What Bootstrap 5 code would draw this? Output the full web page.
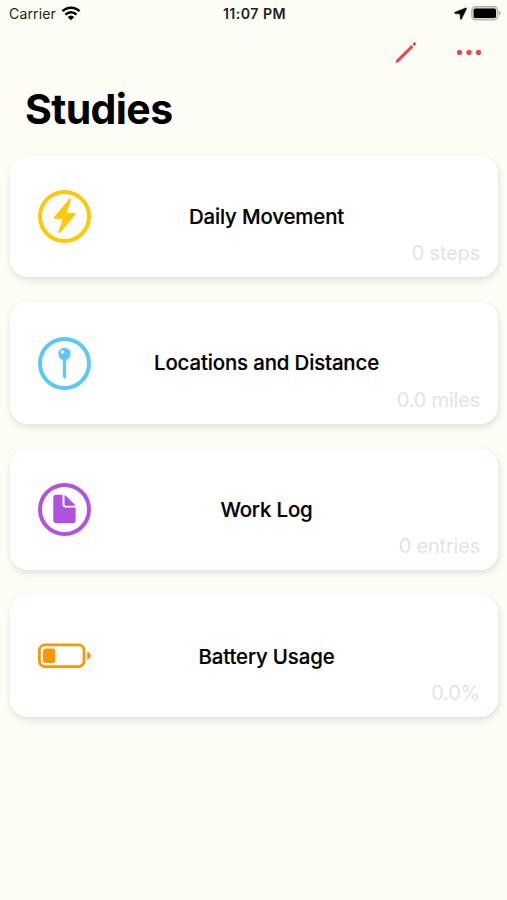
<!DOCTYPE html>
<html lang="en">
<head>
<meta charset="utf-8">
<meta name="viewport" content="width=device-width, initial-scale=1">
<title>Studies</title>
<link href="https://cdn.jsdelivr.net/npm/bootstrap@5.3.0/dist/css/bootstrap.min.css" rel="stylesheet">
<style>
body { background: #fefdf5; color: #000; font-family: Inter, "Liberation Sans", sans-serif; min-height: 900px; }
svg { display: block; flex: none; }
.status-bar { height: 27px; padding: 0 6px 0 9px; font-size: 14px; line-height: 27px; color: #222; }
.status-bar > div { flex: 1 1 0; }
.carrier { letter-spacing: .15px; }
.clock { font-weight: 600; font-size: 14.2px; letter-spacing: .45px; margin-right: 1px; }
.toolbar { height: 51px; padding-right: 25px; gap: 38px; }
.tool { color: #e9484f; }
.page-title { font-size: 41px; font-weight: 700; line-height: 50px; letter-spacing: -.6px; margin: 6px 0 0 25px; }
.studies { padding: 21.7px 9px 0 10px; gap: 25px; }
.study { height: 121.6px; border: 0; border-radius: 18px; background: #fff; color: #000; box-shadow: 1px 3px 7px rgba(0,0,0,.12); display: grid; grid-template: 1fr / 53px 1fr; padding: 0 18px 0 28px; }
.study > svg { align-self: center; }
.study-name { grid-area: 1 / 2; align-self: center; text-align: center; padding: .6px 38px 0 0; font-size: 20.4px; font-weight: 500; line-height: 28px; letter-spacing: -.13px; -webkit-text-stroke: .2px #000; }
.study-count { grid-area: 1 / 2; align-self: end; text-align: right; color: #e3e3e5; font-size: 20px; line-height: 28px; letter-spacing: -.2px; padding-bottom: 10.1px; font-weight: 400; }
</style>
</head>
<body>
<header>
  <div class="status-bar d-flex align-items-center">
    <div class="d-flex align-items-center">
      <span class="carrier">Carrier</span>
      <svg class="ms-1" width="22" height="18" viewBox="0 0 22 18" fill="none" stroke="#000" stroke-width="2.5"><path d="M2.5 6.2a12 12 0 0 1 17 0M5.5 9.6a7.8 7.8 0 0 1 11 0"/><path d="M11 15.3 7.7 12a4.8 4.8 0 0 1 6.6 0z" fill="#000" stroke="none"/></svg>
    </div>
    <span class="clock">11:07 PM</span>
    <div class="d-flex align-items-center justify-content-end">
      <svg width="13" height="13" viewBox="0 0 13 13"><path d="M11.6.9.9 5.3q-1 .8.2 1.3l4.9.5.4 4.9q.4 1 1.1.1l5-10.3q.1-1.1-.9-.9z" stroke="#000" stroke-width=".5"/></svg>
      <svg class="ms-1" width="30" height="15" viewBox="0 0 30 15"><rect x=".7" y=".7" width="26.2" height="13.2" rx="4" fill="#d9d9d4" stroke="#b0b0ad" stroke-width="1.2"/><rect x="2.6" y="2.6" width="22.4" height="9.4" rx="1.6" fill="#000"/><path d="M28 4.8q3.4 2.5 0 5z" fill="#b0b0ad"/></svg>
    </div>
  </div>
  <nav class="toolbar d-flex align-items-center justify-content-end">
    <a class="tool" href="#" aria-label="Edit"><svg width="24" height="24" viewBox="0 0 24 24" fill="currentColor"><path d="m1.2 22.3 1.3-3.6L17.3 4.1l2.1 2.1L4.7 20.9z"/><path d="m18.3 3.1 1.5-1.4q1.1-.8 1.9 0t0 1.9l-1.4 1.5z"/></svg></a>
    <a class="tool" href="#" aria-label="More"><svg width="26" height="8" viewBox="0 0 26 8" fill="currentColor"><circle cx="3.5" cy="3.4" r="2.6"/><circle cx="13" cy="3.4" r="2.6"/><circle cx="22.5" cy="3.4" r="2.6"/></svg></a>
  </nav>
  <h1 class="page-title">Studies</h1>
</header>
<main class="studies d-flex flex-column">
  <section class="card study">
    <svg width="53" height="53" viewBox="0 0 53 53"><circle cx="26.5" cy="26.5" r="24.5" fill="none" stroke="#fdc90b" stroke-width="4"/><path d="M31.3 8.8 15.8 27.4q-.8 1.3.6 1.5H24.5L20.4 41.8q-.1 2.3 1.6 1.2L37.4 24.6q.8-1.3-.6-1.6H28.6L32.9 9.9q.1-2-1.6-1.1z" fill="#fdc90b"/></svg>
    <div class="study-name">Daily Movement</div>
    <div class="study-count">0 steps</div>
  </section>
  <section class="card study">
    <svg width="53" height="53" viewBox="0 0 53 53"><circle cx="26.5" cy="26.5" r="24.5" fill="none" stroke="#5ac8fa" stroke-width="4"/><circle cx="26.5" cy="17" r="6.2" fill="#5ac8fa"/><path d="M24.8 22h3.4v17.2l-1.7 3-1.7-3z" fill="#5ac8fa"/><circle cx="24.5" cy="15" r="1.8" fill="#fff"/></svg>
    <div class="study-name">Locations and Distance</div>
    <div class="study-count">0.0 miles</div>
  </section>
  <section class="card study">
    <svg width="53" height="53" viewBox="0 0 53 53"><circle cx="26.5" cy="26.5" r="24.5" fill="none" stroke="#af52de" stroke-width="4"/><path d="M18.3 11.8h6.2v10q0 2.7 2.7 2.7h10.4v12.8q0 3-3 3H18.3q-3 0-3-3V14.8q0-3 3-3z" fill="#af52de"/><path d="M26.5 12.2q.7 0 1.5.8l8.4 8.2q.8.8.9 1.6h-9.6q-1.2 0-1.2-1.2z" fill="#af52de"/></svg>
    <div class="study-name">Work Log</div>
    <div class="study-count">0 entries</div>
  </section>
  <section class="card study">
    <svg width="53" height="26" viewBox="0 0 53 26"><rect x="1.4" y="1.8" width="44.6" height="21.8" rx="5.5" fill="none" stroke="#ff9500" stroke-width="2.8"/><rect x="5" y="5.4" width="12" height="14.6" rx="2.5" fill="#ff9500"/><path d="M49.2 8.4q3.4 1.1 3.4 4.3t-3.4 4.3z" fill="#ff9500"/></svg>
    <div class="study-name">Battery Usage</div>
    <div class="study-count">0.0%</div>
  </section>
</main>
<script src="https://cdn.jsdelivr.net/npm/bootstrap@5.3.0/dist/js/bootstrap.bundle.min.js"></script>
</body>
</html>
